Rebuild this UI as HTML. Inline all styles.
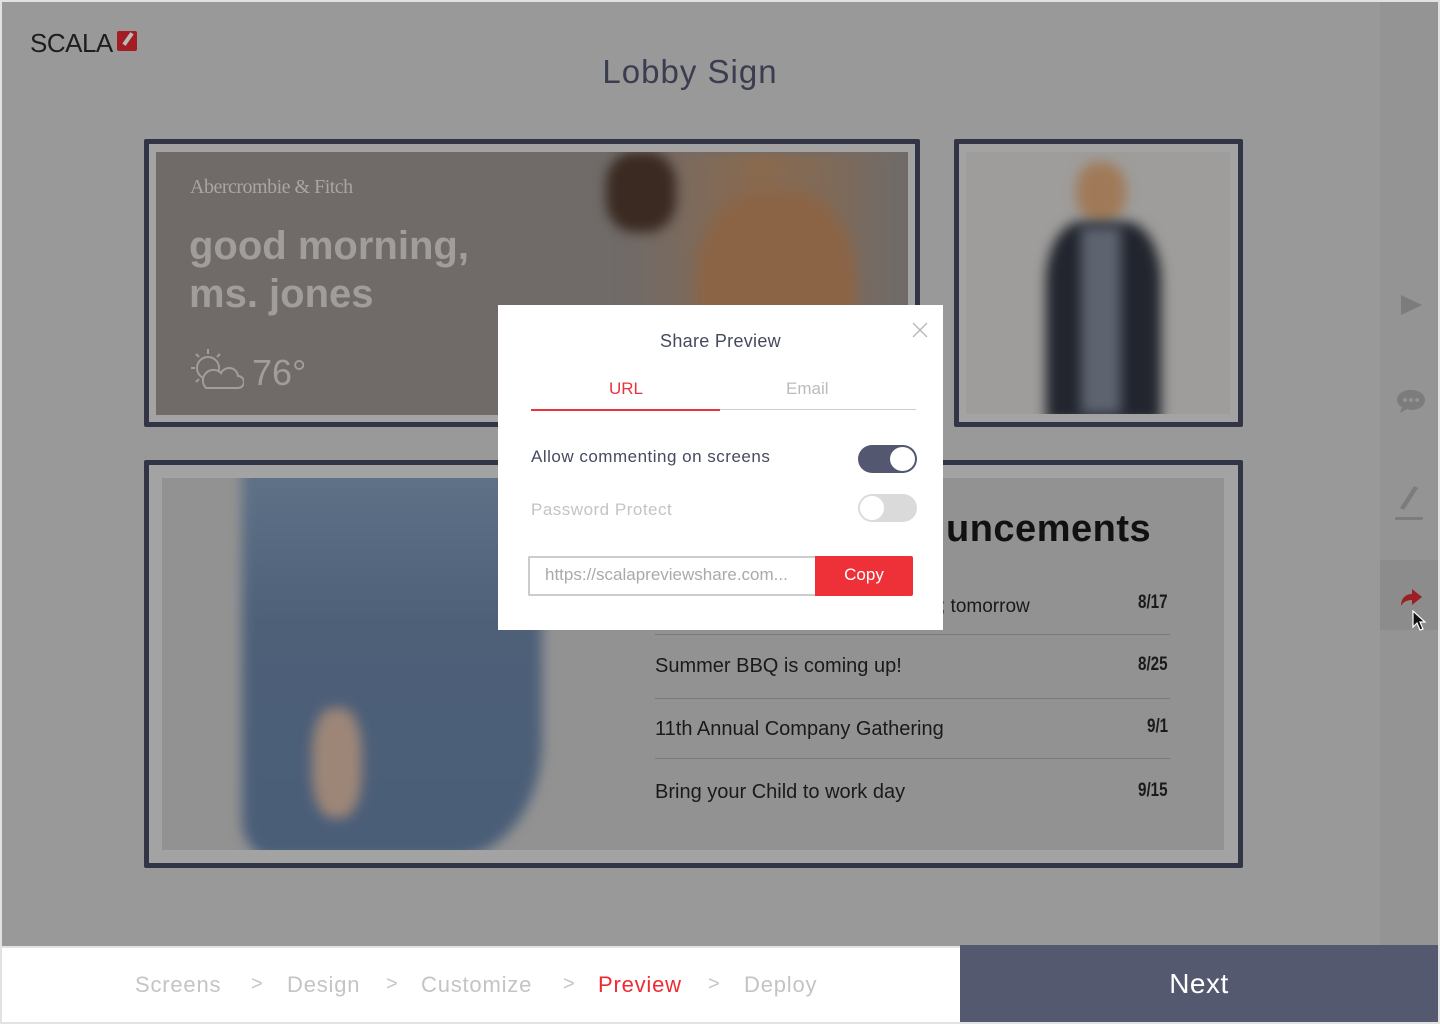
<!DOCTYPE html>
<html><head><meta charset="utf-8"><style>
*{margin:0;padding:0;box-sizing:border-box}
body{width:1440px;height:1024px;background:#e2e2e2;position:relative;overflow:hidden;font-family:"Liberation Sans",sans-serif}
.a{position:absolute}
.frame{position:absolute;border:5px solid #323546;background:#a3a3a3;border-radius:2px}
.t{position:absolute;white-space:nowrap}
.row{position:absolute;left:655px;width:515px;height:1px;background:#7a7a7a}
.b{filter:blur(6px)}
</style></head><body>
<div class="a" style="left:2px;top:2px;width:1436px;height:944px;background:#999"></div>
<div class="a" style="left:1380px;top:2px;width:58px;height:944px;background:#949494"></div>
<div class="a" style="left:1380px;top:560px;width:58px;height:70px;background:#8c8c8c"></div>
<!-- logo -->
<div class="t" style="left:30px;top:28px;font-size:26px;color:#1e1e1e;letter-spacing:-0.5px">SCALA</div>
<div class="a" style="left:117px;top:31px;width:20px;height:20px;background:#a31e24;border-radius:2px"></div>
<div class="a" style="left:126px;top:32px;width:4px;height:14px;background:#bbb;transform:rotate(35deg)"></div>
<div class="t" style="left:0;width:1380px;text-align:center;top:53px;font-size:33px;color:#3a3d50;letter-spacing:1px">Lobby Sign</div>

<!-- frame 1 -->
<div class="frame" style="left:144px;top:139px;width:776px;height:288px"></div>
<div class="a" style="left:156px;top:152px;width:752px;height:263px;background:#706b68;overflow:hidden">
 <div class="a b" style="left:470px;top:0;width:270px;height:263px;background:linear-gradient(90deg,#706b68,#7a6a5e 20%,#8a6a4e 50%,#7d6a5a 80%,#706b68)"></div>
 <div class="a b" style="left:450px;top:0;width:70px;height:80px;border-radius:40%;background:#3a2a22"></div>
 <div class="a b" style="left:540px;top:40px;width:160px;height:223px;border-radius:40% 40% 0 0;background:#8b6446"></div>
</div>
<div class="t" style="left:190px;top:176px;font-family:'Liberation Serif',serif;font-size:20px;color:#a8a5a3;letter-spacing:-0.5px">Abercrombie &amp; Fitch</div>
<div class="t" style="left:189px;top:222px;font-size:40px;font-weight:bold;color:#a09d9b;line-height:48px">good morning,<br>ms. jones</div>
<svg class="a" style="left:188px;top:346px" width="56" height="44" viewBox="0 0 56 44" fill="none" stroke="#a09d9b" stroke-width="2"><circle cx="20" cy="22" r="11"/><path d="M20 3v5M8 8l3 3M32 8l-3 3M3 22h4M8 36l3-3"/><path d="M18 42h32a6 6 0 0 0 0-12a9 9 0 0 0-17-3a7 7 0 0 0-15 15z" fill="#706b68"/></svg>
<div class="t" style="left:252px;top:352px;font-size:36px;color:#a09d9b">76°</div>

<!-- frame 2 -->
<div class="frame" style="left:954px;top:139px;width:289px;height:288px"></div>
<div class="a" style="left:966px;top:152px;width:264px;height:262px;background:#9e9d9b;overflow:hidden">
 <div class="a b" style="left:110px;top:10px;width:50px;height:60px;border-radius:45%;background:#a07a58"></div>
 <div class="a b" style="left:80px;top:70px;width:115px;height:200px;border-radius:30% 30% 0 0;background:#22252e"></div>
 <div class="a b" style="left:115px;top:75px;width:40px;height:187px;background:#5d6470"></div>
</div>

<!-- frame 3 -->
<div class="frame" style="left:144px;top:460px;width:1099px;height:408px"></div>
<div class="a" style="left:162px;top:478px;width:1062px;height:372px;background:#929292;overflow:hidden">
 <div class="a b" style="left:80px;top:-10px;width:300px;height:390px;background:linear-gradient(180deg,#5f7288,#4e6078 40%,#4a5e78);border-radius:0 0 30% 10%"></div>
 <div class="a b" style="left:150px;top:230px;width:50px;height:110px;border-radius:40%;background:#9d8678"></div>
</div>
<div class="t" style="left:946px;top:508px;font-size:38px;font-weight:bold;color:#111;letter-spacing:0.5px">uncements</div>
<div class="t" style="left:940px;top:596px;font-size:19px;color:#1a1a1a">; tomorrow</div>
<div class="t" style="left:1138px;top:592px;font-size:19px;font-weight:bold;color:#1a1a1a;transform:scaleX(0.8);transform-origin:left">8/17</div>
<div class="row" style="top:634px"></div>
<div class="t" style="left:655px;top:655px;font-size:20px;color:#1a1a1a">Summer BBQ is coming up!</div>
<div class="t" style="left:1138px;top:654px;font-size:19px;font-weight:bold;color:#1a1a1a;transform:scaleX(0.8);transform-origin:left">8/25</div>
<div class="row" style="top:698px"></div>
<div class="t" style="left:655px;top:718px;font-size:20px;color:#1a1a1a">11th Annual Company Gathering</div>
<div class="t" style="left:1147px;top:716px;font-size:19px;font-weight:bold;color:#1a1a1a;transform:scaleX(0.8);transform-origin:left">9/1</div>
<div class="row" style="top:758px"></div>
<div class="t" style="left:655px;top:781px;font-size:20px;color:#1a1a1a">Bring your Child to work day</div>
<div class="t" style="left:1138px;top:780px;font-size:19px;font-weight:bold;color:#1a1a1a;transform:scaleX(0.8);transform-origin:left">9/15</div>

<!-- sidebar icons -->
<svg class="a" style="left:1400px;top:294px" width="24" height="24"><path d="M1 1L22 11L1 21Z" fill="#7c7c7c"/></svg>
<svg class="a" style="left:1395px;top:388px" width="32" height="28"><path d="M16 2C8 2 2 6 2 12c0 3 2 6 5 7l-2 6l7-4c1 0 3 1 4 1c8 0 14-4 14-10S24 2 16 2z" fill="#7c7c7c"/><circle cx="10" cy="12" r="2" fill="#949494"/><circle cx="16" cy="12" r="2" fill="#949494"/><circle cx="22" cy="12" r="2" fill="#949494"/></svg>
<svg class="a" style="left:1394px;top:482px" width="32" height="40"><path d="M6 26L20 4l4 2L10 28z" fill="#7c7c7c"/><rect x="1" y="35" width="28" height="3" rx="1.5" fill="#7c7c7c"/></svg>
<svg class="a" style="left:1398px;top:586px" width="26" height="22"><path d="M3 20C3 12 8 8 14 8V3l10 8l-10 8v-5C9 14 5 16 3 20z" fill="#9b1f23"/></svg>
<svg class="a" style="left:1412px;top:610px" width="16" height="22"><path d="M1 1v16l4-4l3 7l3-1l-3-7h5z" fill="#111" stroke="#fff" stroke-width="1.2"/></svg>

<!-- modal -->
<div class="a" style="left:498px;top:305px;width:445px;height:325px;background:#fff"></div>
<svg class="a" style="left:911px;top:321px" width="18" height="18"><path d="M2 2L16 16M16 2L2 16" stroke="#bbb" stroke-width="1.5"/></svg>
<div class="t" style="left:498px;width:445px;text-align:center;top:331px;font-size:18px;color:#454a5e;letter-spacing:0.3px">Share Preview</div>
<div class="t" style="left:609px;top:379px;font-size:17px;color:#e8333a">URL</div>
<div class="t" style="left:786px;top:379px;font-size:17px;color:#bbb">Email</div>
<div class="a" style="left:531px;top:409px;width:385px;height:1px;background:#ccc"></div>
<div class="a" style="left:531px;top:409px;width:189px;height:2px;background:#e8333a"></div>
<div class="t" style="left:531px;top:447px;font-size:17px;color:#454a5e;letter-spacing:0.5px">Allow commenting on screens</div>
<div class="a" style="left:858px;top:445px;width:59px;height:28px;border-radius:14px;background:#535770"></div>
<div class="a" style="left:890px;top:447px;width:25px;height:24px;border-radius:50%;background:#fff"></div>
<div class="t" style="left:531px;top:500px;font-size:17px;color:#c4c4c4;letter-spacing:0.5px">Password Protect</div>
<div class="a" style="left:858px;top:494px;width:59px;height:28px;border-radius:14px;background:#dadada"></div>
<div class="a" style="left:859px;top:495px;width:26px;height:26px;border-radius:50%;background:#fff;border:1px solid #ddd"></div>
<div class="a" style="left:528px;top:556px;width:290px;height:40px;border:2px solid #ccc;border-right:none;border-radius:2px 0 0 2px"></div>
<div class="t" style="left:545px;top:565px;font-size:17px;color:#aaa">https://scalapreviewshare.com...</div>
<div class="a" style="left:815px;top:556px;width:98px;height:40px;background:#ee3039;border-radius:0 2px 2px 0"></div>
<div class="t" style="left:815px;width:98px;text-align:center;top:565px;font-size:17px;color:#fff">Copy</div>

<!-- bottom bar -->
<div class="a" style="left:2px;top:948px;width:958px;height:74px;background:#fff"></div>
<div class="a" style="left:960px;top:945px;width:478px;height:77px;background:#545970"></div>
<div class="t" style="left:135px;top:972px;font-size:22px;color:#c4c4c4;letter-spacing:0.8px">Screens</div>
<div class="t" style="left:251px;top:973px;font-size:20px;color:#c4c4c4">&gt;</div>
<div class="t" style="left:287px;top:972px;font-size:22px;color:#c4c4c4;letter-spacing:0.8px">Design</div>
<div class="t" style="left:386px;top:973px;font-size:20px;color:#c4c4c4">&gt;</div>
<div class="t" style="left:421px;top:972px;font-size:22px;color:#c4c4c4;letter-spacing:0.8px">Customize</div>
<div class="t" style="left:563px;top:973px;font-size:20px;color:#c4c4c4">&gt;</div>
<div class="t" style="left:598px;top:972px;font-size:22px;color:#ee2b33;letter-spacing:0.8px">Preview</div>
<div class="t" style="left:708px;top:973px;font-size:20px;color:#c4c4c4">&gt;</div>
<div class="t" style="left:744px;top:972px;font-size:22px;color:#c4c4c4;letter-spacing:0.8px">Deploy</div>
<div class="t" style="left:960px;width:478px;text-align:center;top:968px;font-size:28px;color:#fff;letter-spacing:0.5px">Next</div>
</body></html>
